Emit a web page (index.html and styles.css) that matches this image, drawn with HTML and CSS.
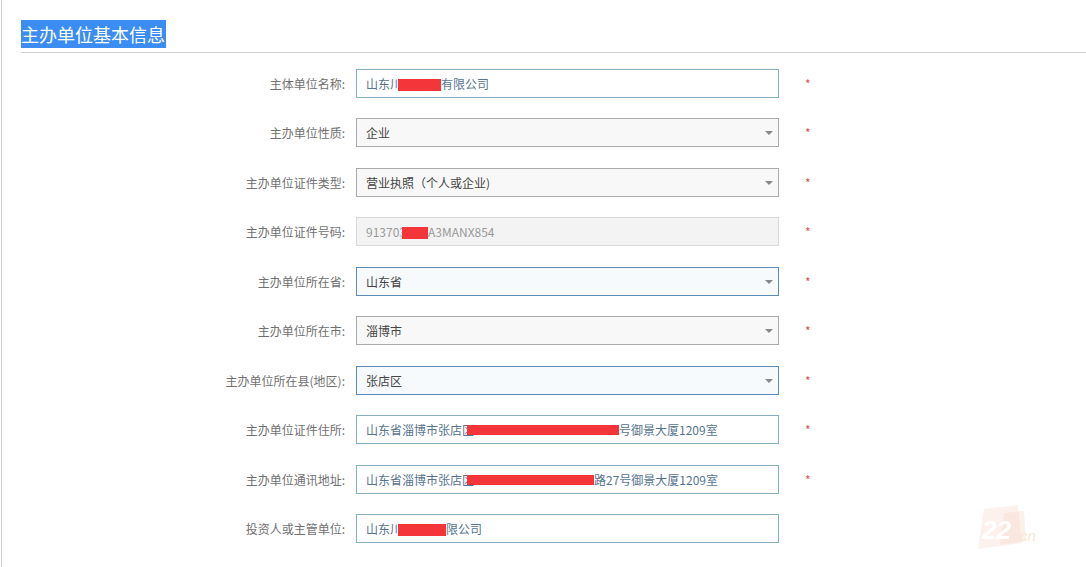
FILE: index.html
```html
<!DOCTYPE html>
<html lang="zh-CN">

<head>
    <meta charset="UTF-8">
    <title>主办单位基本信息</title>
    <link rel="stylesheet" href="styles.css">
</head>

<body>
    <div class="page">
        <div class="section-title"><span>主办单位基本信息</span></div>

        <div class="form">
            <label class="form-label">主体单位名称:</label>
            <div class="field text">山东川<i class="mask" style="width: 43px"></i>有限公司</div>
            <span class="req">*</span>

            <label class="form-label">主办单位性质:</label>
            <div class="field select">企业<b class="arrow"></b></div>
            <span class="req">*</span>

            <label class="form-label">主办单位证件类型:</label>
            <div class="field select">营业执照（个人或企业)<b class="arrow"></b></div>
            <span class="req">*</span>

            <label class="form-label">主办单位证件号码:</label>
            <div class="field readonly">913703<i class="mask" style="width: 26px"></i>A3MANX854</div>
            <span class="req">*</span>

            <label class="form-label">主办单位所在省:</label>
            <div class="field select active">山东省<b class="arrow"></b></div>
            <span class="req">*</span>

            <label class="form-label">主办单位所在市:</label>
            <div class="field select">淄博市<b class="arrow"></b></div>
            <span class="req">*</span>

            <label class="form-label">主办单位所在县(地区):</label>
            <div class="field select active">张店区<b class="arrow"></b></div>
            <span class="req">*</span>

            <label class="form-label">主办单位证件住所:</label>
            <div class="field text">山东省淄博市张店区<i class="mask wide" style="width: 152px"></i>号御景大厦1209室</div>
            <span class="req">*</span>

            <label class="form-label">主办单位通讯地址:</label>
            <div class="field text">山东省淄博市张店区<i class="mask wide" style="width: 127px"></i>路27号御景大厦1209室</div>
            <span class="req">*</span>

            <label class="form-label">投资人或主管单位:</label>
            <div class="field text">山东川<i class="mask" style="width: 48px"></i>限公司</div>
            <span class="req"></span>
        </div>
    </div>

    <!-- site watermark -->
    <svg class="watermark" width="80" height="50" viewBox="0 0 80 50">
        <path d="M10 6 L44 2 L48 40 L4 46 Z" fill="#f6c9b8" opacity="0.5" />
        <path d="M30 10 L50 8 L52 38 L26 42 Z" fill="#f3b69e" opacity="0.4" />
        <text x="8" y="36" font-family="Liberation Sans, sans-serif" font-size="26" font-weight="bold"
            font-style="italic" fill="#ffffff">22</text>
        <text x="46" y="38" font-family="Liberation Sans, sans-serif" font-size="15" font-style="italic"
            fill="#f5c9a8">cn</text>
    </svg>
</body>

</html>
```

FILE: styles.css
```css
body {
    margin: 0;
    background-color: #fff;
    font-family: "Microsoft YaHei", "Noto Sans CJK SC", sans-serif;
    color: #555;
    overflow: hidden;
}

.page {
    margin-left: 1px;
    border-left: 1px solid #d2d2d2;
    min-height: 567px;
    padding-top: 20px;
    box-sizing: border-box;
}

/* Section heading */
.section-title {
    margin-left: 19px;
    padding-bottom: 4px;
    border-bottom: 1px solid #d0d0d0;
    font-size: 18px;
    line-height: 28px;
    height: 28px;
}

.section-title span {
    display: inline-block;
    background-color: #3b8cf3;
    color: #fff;
    padding-right: 1px;
}

/* Form grid */
.form {
    display: grid;
    grid-template-columns: 343px 423px 40px;
    grid-auto-rows: 29px;
    column-gap: 11px;
    row-gap: 20.45px;
    margin-top: 16px;
    font-size: 12px;
}

.form-label {
    text-align: right;
    line-height: 29px;
    color: #707070;
}

.field {
    position: relative;
    box-sizing: border-box;
    height: 29px;
    line-height: 27px;
    padding: 0 9px;
    border: 1px solid #aaa;
    white-space: nowrap;
    overflow: hidden;
}

.field.text {
    border-color: #86afc0;
    color: #56748f;
    background-color: #fff;
}

.field.select {
    background-color: #f8f8f8;
    color: #444;
}

.field.select.active {
    border-color: #5b8bb6;
    background-color: #f7fafc;
}

.field.readonly {
    border-color: #d9d9d9;
    background-color: #f3f3f3;
    color: #999;
}

.arrow {
    position: absolute;
    right: 5px;
    top: 12px;
    width: 0;
    height: 0;
    border-left: 4px solid transparent;
    border-right: 4px solid transparent;
    border-top: 4px solid #888;
}

.mask {
    display: inline-block;
    height: 12px;
    margin-left: -4px;
    vertical-align: -2px;
    background-color: #f4353a;
}

.mask.wide {
    margin-left: -7px;
    height: 10px;
    vertical-align: 0;
}

.req {
    color: #d05555;
    line-height: 29px;
    font-size: 12px;
    padding-left: 15px;
}

.watermark {
    position: fixed;
    right: 32px;
    bottom: 14px;
    opacity: 0.5;
}
```
